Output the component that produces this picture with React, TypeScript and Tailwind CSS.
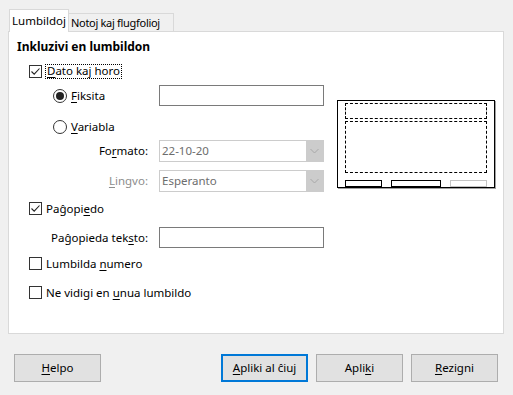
import React from 'react';

function U({ children }: { children: React.ReactNode }) {
  return <span className="underline underline-offset-[2px] decoration-1">{children}</span>;
}

function Check({ checked }: { checked?: boolean }) {
  return (
    <span className="flex h-[13px] w-[13px] shrink-0 items-center justify-center border border-[#333333] bg-white">
      {checked && (
        <svg width="11" height="11" viewBox="0 0 11 11">
          <path d="M1.5 5.5 L4.2 8.2 L9.5 2.5" fill="none" stroke="#222" strokeWidth="1.1" />
        </svg>
      )}
    </span>
  );
}

function Radio({ checked }: { checked?: boolean }) {
  return (
    <span className="flex h-[14px] w-[14px] shrink-0 items-center justify-center rounded-full border border-[#333333] bg-white">
      {checked && <span className="h-[8px] w-[8px] rounded-full bg-[#222222]" />}
    </span>
  );
}

function Combo({ value }: { value: string }) {
  return (
    <div className="flex h-[22px] w-[165px] border border-[#cccccc] bg-white">
      <span className="flex-1 pl-[2px] leading-[20px] text-[#6d6d6d]">{value}</span>
      <span className="flex w-[17px] items-center justify-center bg-[#cccccc]">
        <svg width="9" height="6" viewBox="0 0 9 6">
          <path d="M0.5 1 L4.5 5 L8.5 1" fill="none" stroke="#a8a8a8" strokeWidth="1" />
        </svg>
      </span>
    </div>
  );
}

function Btn({ children, primary }: { children: React.ReactNode; primary?: boolean }) {
  return (
    <button
      className={
        primary
          ? 'h-[28px] w-[87px] border-2 border-[#0078d7] bg-[#e1e1e1] text-black'
          : 'h-[28px] w-[87px] border border-[#adadad] bg-[#e1e1e1] text-black'
      }
    >
      {children}
    </button>
  );
}

function Preview() {
  return (
    <div className="h-[88px] w-[158px] border border-black bg-white px-[7px] pt-[2px] shadow-[1px_1px_0_#a0a0a0]">
      <div className="h-[16px] border border-dashed border-black" />
      <div className="mt-[2px] h-[52px] border border-dashed border-black" />
      <div className="mt-[7px] flex justify-between">
        <div className="h-[7px] w-[37px] border border-black" />
        <div className="h-[7px] w-[50px] border border-black" />
        <div className="h-[7px] w-[37px] border border-[#c4c4c4]" />
      </div>
    </div>
  );
}

export default function App() {
  return (
    <div className="h-[395px] w-[513px] overflow-hidden bg-[#f0f0f0] pt-[9px] font-['Noto_Sans',sans-serif] text-[11.5px] text-black">
      {/* tabs */}
      <div className="ml-[9px] flex items-end whitespace-nowrap">
        <div className="relative z-10 -mb-px flex h-[23px] w-[60px] shrink-0 items-center border border-b-0 border-[#d9d9d9] bg-white pl-[2px]">
          Lumbildoj
        </div>
        <div className="flex h-[18px] w-[105px] shrink-0 items-center overflow-hidden border border-l-0 border-b-0 border-[#d9d9d9] bg-[#f0f0f0] pl-[2px] text-[11px] leading-none tracking-[-0.3px]">
          Notoj kaj flugfolioj
        </div>
      </div>

      {/* panel */}
      <div className="ml-[8px] flex h-[303px] w-[496px] border border-[#d9d9d9] bg-white whitespace-nowrap">
        <div className="w-[328px]">
          <div className="mt-[6px] flex h-[18px] items-center pl-[8px] text-[12px] font-bold">Inkluzivi en lumbildon</div>

          <div className="mt-[6px] flex h-[18px] items-center pl-[20px]">
            <Check checked />
            <span className="ml-[3px] border border-dotted border-black px-[1px] leading-[12px] pb-px">
              <U>D</U>ato kaj horo
            </span>
          </div>

          <div className="mt-[5px] flex h-[21px] items-center">
            <div className="flex w-[150px] items-center pl-[44px]">
              <Radio checked />
              <span className="ml-[4px]">
                <U>F</U>iksita
              </span>
            </div>
            <div className="h-[21px] w-[165px] border border-[#7a7a7a] bg-white" />
          </div>

          <div className="mt-[11px] flex h-[20px] items-center pl-[44px]">
            <Radio />
            <span className="ml-[4px]">
              <U>V</U>ariabla
            </span>
          </div>

          <div className="mt-[3px] flex h-[22px] items-center">
            <div className="w-[150px] pr-[11px] text-right">
              Fo<U>r</U>mato:
            </div>
            <Combo value="22-10-20" />
          </div>

          <div className="mt-[8px] flex h-[22px] items-center">
            <div className="w-[150px] pr-[11px] text-right text-[#8d8d8d]">
              <U>L</U>ingvo:
            </div>
            <Combo value="Esperanto" />
          </div>

          <div className="mt-[7px] flex h-[19px] items-center pl-[20px]">
            <Check checked />
            <span className="ml-[4px]">
              Paĝopi<U>e</U>do
            </span>
          </div>

          <div className="mt-[9px] flex h-[21px] items-center">
            <div className="w-[150px] pr-[11px] text-right">
              Paĝopieda tek<U>s</U>to:
            </div>
            <div className="h-[21px] w-[165px] border border-[#7a7a7a] bg-white" />
          </div>

          <div className="mt-[6px] flex h-[19px] items-center pl-[20px]">
            <Check />
            <span className="ml-[4px]">
              Lumbilda <U>n</U>umero
            </span>
          </div>

          <div className="mt-[10px] flex h-[19px] items-center pl-[20px]">
            <Check />
            <span className="ml-[4px]">
              Ne vidigi en <U>u</U>nua lumbildo
            </span>
          </div>
        </div>

        <div className="pt-[68px]">
          <Preview />
        </div>
      </div>

      {/* buttons */}
      <div className="mt-[20px] flex pl-[14px] pr-[15px]">
        <Btn>
          <U>H</U>elpo
        </Btn>
        <div className="ml-auto flex gap-[8px]">
          <Btn primary>
            <U>A</U>pliki al ĉiuj
          </Btn>
          <Btn>
            Apli<U>k</U>i
          </Btn>
          <Btn>
            <U>R</U>ezigni
          </Btn>
        </div>
      </div>
    </div>
  );
}
